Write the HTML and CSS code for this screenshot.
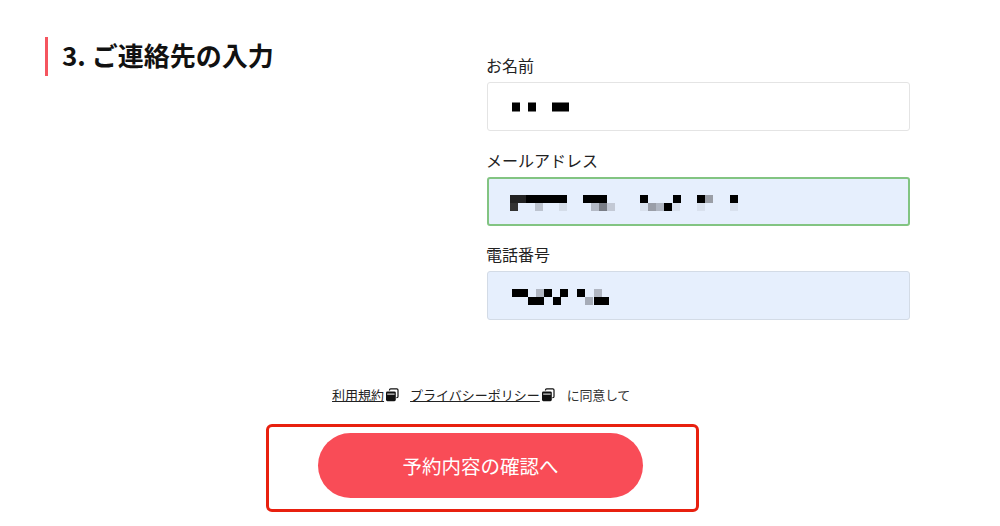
FILE: index.html
```html
<!DOCTYPE html>
<html lang="ja">
<head>
    <meta charset="UTF-8">
    <meta name="viewport" content="width=device-width, initial-scale=1.0">
    <title>ご連絡先の入力</title>
    <link rel="stylesheet" href="styles.css">
</head>
<body>
    <main class="page">
        <section class="contact">
            <h2 class="contact-title">3. ご連絡先の入力</h2>
            <form class="contact-form">
                <div class="field">
                    <label class="field-label">お名前</label>
                    <div class="field-box">
                        <svg class="mosaic" width="260" height="16" viewBox="0 0 260 16">
                            <rect x="1" y="2.5" width="8" height="9" fill="#000"/>
                            <rect x="17" y="2.5" width="8" height="9" fill="#000"/>
                            <rect x="41" y="2.5" width="17" height="9" fill="#000"/>
                        </svg>
                    </div>
                </div>
                <div class="field">
                    <label class="field-label">メールアドレス</label>
                    <div class="field-box is-filled is-valid">
                        <svg class="mosaic" width="260" height="16" viewBox="0 0 260 16">
                            <rect x="0" y="0" width="16" height="8" fill="#222"/>
                            <rect x="16" y="0" width="41" height="8" fill="#000"/>
                            <rect x="73" y="0" width="24" height="8" fill="#000"/>
                            <rect x="130" y="0" width="8" height="8" fill="#000"/>
                            <rect x="163" y="0" width="8" height="8" fill="#000"/>
                            <rect x="187" y="0" width="8" height="8" fill="#000"/>
                            <rect x="195" y="0" width="8" height="8" fill="#9a9ea6"/>
                            <rect x="220" y="0" width="8" height="8" fill="#000"/>
                            <rect x="0" y="8" width="8" height="8" fill="#333"/>
                            <rect x="25" y="8" width="8" height="8" fill="#bcc3cf"/>
                            <rect x="49" y="8" width="8" height="8" fill="#d5dde9"/>
                            <rect x="81" y="8" width="8" height="8" fill="#b4bac6"/>
                            <rect x="89" y="8" width="8" height="8" fill="#797d86"/>
                            <rect x="97" y="8" width="8" height="8" fill="#c3c9d5"/>
                            <rect x="130" y="8" width="8" height="8" fill="#d9e1ee"/>
                            <rect x="138" y="8" width="8" height="8" fill="#9a9ea8"/>
                            <rect x="146" y="8" width="8" height="8" fill="#b0b6c2"/>
                            <rect x="154" y="8" width="8" height="8" fill="#000"/>
                            <rect x="162" y="8" width="8" height="8" fill="#d9e1ee"/>
                            <rect x="187" y="8" width="8" height="8" fill="#d9e1ee"/>
                            <rect x="220" y="8" width="8" height="8" fill="#d9e1ee"/>
                        </svg>
                    </div>
                </div>
                <div class="field">
                    <label class="field-label">電話番号</label>
                    <div class="field-box is-filled">
                        <svg class="mosaic" width="260" height="16" viewBox="0 0 260 16">
                            <rect x="1" y="0" width="16" height="8" fill="#000"/>
                            <rect x="25" y="0" width="8" height="8" fill="#b0b6c2"/>
                            <rect x="33" y="0" width="8" height="8" fill="#000"/>
                            <rect x="49" y="0" width="8" height="8" fill="#000"/>
                            <rect x="66" y="0" width="8" height="8" fill="#000"/>
                            <rect x="83" y="0" width="8" height="8" fill="#b0b6c2"/>
                            <rect x="17" y="8" width="16" height="8" fill="#000"/>
                            <rect x="42" y="8" width="8" height="8" fill="#000"/>
                            <rect x="74" y="8" width="8" height="8" fill="#a6acb8"/>
                            <rect x="83" y="8" width="15" height="8" fill="#000"/>
                        </svg>
                    </div>
                </div>
            </form>
        </section>

        <p class="agree">
            <a class="agree-link" href="#">利用規約</a><svg class="window-icon" width="14" height="14" viewBox="0 0 14 14">
                <path d="M4.5 2.6V2a1.2 1.2 0 0 1 1.2-1.2h6.1A1.2 1.2 0 0 1 13 2v6.4a1.2 1.2 0 0 1-1.2 1.2h-.4" fill="none" stroke="#111" stroke-width="1.2"/>
                <rect x="1" y="3.4" width="9.8" height="9.8" rx="1.4" fill="#111"/>
                <rect x="2.2" y="5.6" width="7.4" height="1" fill="#fff"/>
            </svg>
            <a class="agree-link agree-link-second" href="#">プライバシーポリシー</a><svg class="window-icon" width="14" height="14" viewBox="0 0 14 14">
                <path d="M4.5 2.6V2a1.2 1.2 0 0 1 1.2-1.2h6.1A1.2 1.2 0 0 1 13 2v6.4a1.2 1.2 0 0 1-1.2 1.2h-.4" fill="none" stroke="#111" stroke-width="1.2"/>
                <rect x="1" y="3.4" width="9.8" height="9.8" rx="1.4" fill="#111"/>
                <rect x="2.2" y="5.6" width="7.4" height="1" fill="#fff"/>
            </svg>
            <span class="agree-text">に同意して</span>
        </p>

        <div class="submit-frame">
            <button type="button" class="submit-button">予約内容の確認へ</button>
        </div>
    </main>
</body>
</html>
```

FILE: styles.css
```css
*, *::before, *::after
{
    box-sizing: border-box;
    margin: 0;
    padding: 0;
}
html, body
{
    background-color: #fff;
    height: 526px;
    overflow: hidden;
}
body
{
    font-family: "Noto Sans CJK JP", "Noto Sans", sans-serif;
    color: #222;
}
.page
{
    width: 961px;
    padding: 37px 0 0 45px;
}
.contact
{
    display: flex;
    justify-content: space-between;
    padding-right: 51px;
}
.contact-title
{
    height: 39px;
    border-left: 3px solid #f5555f;
    padding-left: 14px;
    font-size: 26px;
    font-weight: 700;
    line-height: 36px;
    color: #111;
}
.contact-form
{
    width: 423px;
    padding-top: 16px;
}
.field
{
    margin-bottom: 16.5px;
}
.field-label
{
    display: block;
    margin-left: -1px;
    margin-bottom: 5px;
    font-size: 16px;
    line-height: 24px;
}
.field-box
{
    display: flex;
    align-items: center;
    height: 49px;
    padding-left: 23px;
    background-color: #fff;
    border: 1px solid #e4e4e4;
    border-radius: 3px;
}
.field-box.is-filled
{
    background-color: #e6effd;
    border-color: #d3dbe6;
}
.field-box.is-valid
{
    border: 2px solid #82c482;
    padding-left: 21px;
}
.mosaic
{
    margin-top: 3px;
}
.agree
{
    display: flex;
    justify-content: center;
    align-items: center;
    margin-top: 48px;
    margin-left: -45px;
    padding-left: 1px;
    font-size: 13px;
    line-height: 20px;
}
.agree-link
{
    color: #222;
    text-decoration: underline;
}
.agree-link-second
{
    margin-left: 11px;
}
.window-icon
{
    margin-left: 1px;
}
.agree-text
{
    margin-left: 12px;
    letter-spacing: -0.3px;
    color: #333;
}
.submit-frame
{
    width: 433px;
    height: 88px;
    margin: 19px 0 0 221px;
    padding: 0 4px 5px 0;
    display: flex;
    justify-content: center;
    align-items: center;
    border: 3.5px solid #e8200f;
    border-radius: 6px;
}
.submit-button
{
    width: 325px;
    height: 65px;
    background-color: #f94c57;
    color: #fff;
    border: none;
    border-radius: 33px;
    font-family: inherit;
    font-size: 19.5px;
    font-weight: 400;
}
```
